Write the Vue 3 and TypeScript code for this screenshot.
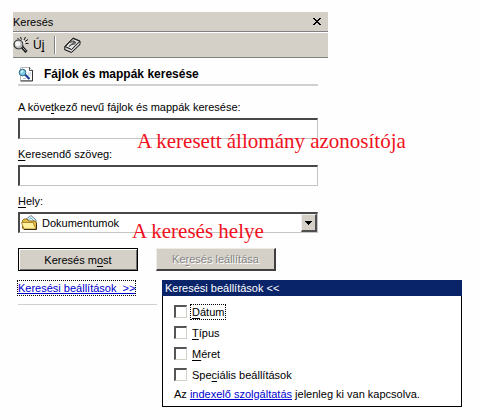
<script setup lang="ts">
import { ref } from 'vue'

interface Option {
  id: string
  before: string
  key: string
  after: string
}

const fileName = ref('')
const content = ref('')
const place = ref('Dokumentumok')
const checked = ref<string[]>([])

const options: Option[] = [
  { id: 'date', before: '', key: 'D', after: 'átum' },
  { id: 'type', before: '', key: 'T', after: 'ípus' },
  { id: 'size', before: '', key: 'M', after: 'éret' },
  { id: 'special', before: 'Spe', key: 'c', after: 'iális beállítások' },
]
</script>

<template>
  <main class="page">
    <section class="panel">
      <header class="titlebar">
        <span>Keresés</span>
        <button class="close" type="button" aria-label="Bezárás">
          <svg width="8" height="7" viewBox="0 0 8 7" shape-rendering="crispEdges">
            <path d="M0 0h2v1h1v1h2v-1h1v-1h2v1h-1v1h-1v1h-1v1h1v1h1v1h1v1h-2v-1h-1v-1h-2v1h-1v1h-2v-1h1v-1h1v-1h1v-1h-1v-1h-1v-1h-1z" fill="#000" />
          </svg>
        </button>
      </header>

      <nav class="toolbar">
        <button class="tool new" type="button">
          <svg width="16" height="16" viewBox="0 0 16 16">
            <path d="M7.500 0l1 2.500M12.500 0l-1.500 3M15 2.500l-3 2M12.500 6.500h3M4.500 1l1.500 1.500" stroke="#111" />
            <path d="M8.500 9.500l5 5.500" stroke="#111" stroke-width="3" />
            <path d="M9.500 10.500l3.500 3.700" stroke="#b5b5b5" />
            <circle cx="5.500" cy="7.500" r="4.500" fill="#b9b9b9" stroke="#333" stroke-width="1.200" />
            <circle cx="4.800" cy="6.800" r="2.600" fill="#f4f4f4" />
            <path d="M9.500 3.500l2 1.500-1 2.500" fill="none" stroke="#fff" />
          </svg>
          <span>Ú<u>j</u></span>
        </button>
        <span class="divider"></span>
        <button class="tool" type="button" aria-label="Súgó">
          <svg width="17" height="16" viewBox="0 0 17 16">
            <path d="M.8 9.500l8.200-8.500 7 3v3.500l-8.500 8-6.700-2.700z" fill="#8b8b8b" stroke="#111" />
            <path d="M1.500 9.500l7.500-8 6.500 2.700-8 8.300z" fill="#e6e6e6" stroke="#222" />
            <path d="M1.500 11.500l6 2.500 8-7.800" fill="none" stroke="#fff" />
            <path d="M5 9.500l6-5M6 5.500l3.500-1.500 2 1.500-1 1.500-3.500.7" fill="none" stroke="#555" stroke-width="1.200" />
          </svg>
        </button>
      </nav>

      <form class="form" @submit.prevent>
        <h1 class="heading">
          <svg width="16" height="16" viewBox="0 0 16 16">
            <path d="M2.500 1.500h9l3 3v10h-12z" fill="#fff" stroke="#bbb" />
            <path d="M14.500 4v11h-12" fill="none" stroke="#333" />
            <path d="M11.500 1v3.500h3" fill="none" stroke="#555" />
            <path d="M10 7h3M10 9h3M5 12.500h3" stroke="#b9c6d6" />
            <path d="M7 8.500l4.500 4.500" stroke="#153c91" stroke-width="2.200" />
            <circle cx="4.500" cy="6.500" r="3.300" fill="#82cbe4" stroke="#286789" />
            <path d="M3 6.500l2-2" stroke="#eaffff" stroke-width="1.200" />
          </svg>
          <span>Fájlok és mappák keresése</span>
        </h1>

        <label class="label" for="file-name">A köve<u>t</u>kező nevű fájlok és mappák keresése:</label>
        <input id="file-name" v-model="fileName" class="field" type="text" />

        <label class="label" for="content"><u>K</u>eresendő szöveg:</label>
        <input id="content" v-model="content" class="field" type="text" />

        <label class="label" for="place"><u>H</u>ely:</label>
        <div class="combo">
          <svg width="17" height="16" viewBox="0 0 17 16">
            <path d="M4 5l6-4.500 5 4.500v6h-9z" fill="#e8f3fa" stroke="#65869b" />
            <path d="M7 5l3-2 3 3" fill="none" stroke="#71b5d8" />
            <path d="M1.500 13.500v-8l1.500-1.500h3l1.500 2h6.500l1.500 2v6h-13z" fill="#e3bc45" stroke="#8b6c1c" />
            <path d="M.5 7.500h11.500l3 6.500h-12z" fill="#fff09b" stroke="#ae8b2f" />
            <path d="M3 14.500h12.500v-6" fill="none" stroke="#3c3211" />
          </svg>
          <select id="place" v-model="place" class="select">
            <option>Dokumentumok</option>
          </select>
          <span class="arrow">
            <svg width="7" height="4" viewBox="0 0 7 4" shape-rendering="crispEdges">
              <path d="M0 0h7v1h-1v1h-1v1h-1v1h-1v-1h-1v-1h-1v-1h-1z" fill="#000" />
            </svg>
          </span>
        </div>

        <div class="actions">
          <button class="button primary" type="submit">Keresés m<u>o</u>st</button>
          <button class="button" type="button" disabled>Ke<u>r</u>esés leállítása</button>
        </div>
      </form>
      <p class="note note-name">A keresett állomány azonosítója</p>
      <p class="note note-place">A keresés helye</p>
    </section>

    <div class="lower">
      <div class="toggle">
        <a class="toggle-link" href="#options">Keresési beállítások&nbsp; &gt;&gt;</a>
      </div>
      <section id="options" class="options">
        <h2 class="options-title">Keresési beállítások &lt;&lt;</h2>
        <div class="options-body">
          <label v-for="option in options" :key="option.id" class="option">
            <input v-model="checked" class="check" type="checkbox" :value="option.id" />
            <span :class="['option-text', { focused: option.id === 'date' }]">{{ option.before }}<u>{{ option.key }}</u>{{ option.after }}</span>
          </label>
          <p class="status">Az <a href="#index">indexelő szolgáltatás</a> jelenleg ki van kapcsolva.</p>
        </div>
      </section>
    </div>
  </main>
</template>

<style>
body {
  margin: 0;
  background: #fefefe;
}
</style>

<style scoped>
* {
  box-sizing: border-box;
}

.page {
  padding: 12px 18px 12px 13px;
  font: 11px/14px "Liberation Sans", Arial, sans-serif;
  color: #000;
}

.panel {
  position: relative;
  margin-right: 134px;
}

button,
input,
select {
  margin: 0;
  font: inherit;
  color: inherit;
}

u {
  text-underline-offset: 2px;
}

.titlebar {
  display: flex;
  align-items: center;
  justify-content: space-between;
  height: 20px;
  padding-right: 7px;
  background: #d4d0c8;
  border-bottom: 1px solid #808080;
}

.close {
  display: flex;
  padding: 0;
  border: 0;
  background: none;
}

.toolbar {
  display: flex;
  align-items: center;
  gap: 8px;
  height: 26px;
  background: #d4d0c8;
  border-top: 1px solid #fff;
  border-bottom: 1px solid #808080;
}

.tool {
  display: flex;
  align-items: center;
  gap: 4px;
  padding: 0 2px 0 0;
  border: 0;
  background: none;
}

.new {
  font-size: 12px;
}

.divider {
  width: 2px;
  height: 18px;
  border-left: 1px solid #808080;
  border-right: 1px solid #fff;
}

.form {
  padding: 5px 10px 0 5px;
}

.heading {
  display: flex;
  align-items: center;
  gap: 10px;
  height: 23px;
  margin: 0 0 14px;
  border-bottom: 2px solid #d0d0d0;
  font-size: 12px;
  font-weight: bold;
}

.label {
  display: block;
  height: 18px;
}

.field,
.combo {
  display: block;
  width: 100%;
  height: 21px;
  margin-bottom: 8px;
  padding: 0 2px;
  background: #fff;
  border: 1px solid #c4c4c4;
  border-top: 2px solid #484848;
  border-left: 2px solid #484848;
  border-radius: 0;
  outline: 0;
}

.combo {
  display: flex;
  align-items: center;
  margin-bottom: 15px;
  padding: 0 0 0 1px;
}

.select {
  flex: 1;
  min-width: 0;
  padding: 0 4px;
  border: 0;
  background: none;
  appearance: none;
  outline: 0;
}

.arrow {
  display: flex;
  align-items: center;
  justify-content: center;
  width: 16px;
  height: 18px;
  background: #d4d0c8;
  border: 1px solid #eee;
  border-right: 2px solid #505050;
  border-bottom: 2px solid #505050;
  pointer-events: none;
}

.actions {
  display: grid;
  grid-template-columns: 1fr 1fr;
  column-gap: 18px;
  margin-right: 42px;
}

.button {
  height: 23px;
  padding: 0;
  background: #d4d0c8;
  border: 1px solid #eeece6;
  border-right: 2px solid #404040;
  border-bottom: 2px solid #404040;
  border-radius: 0;
}

.primary {
  border: 1px solid #000;
  box-shadow: inset 1px 1px #fff, inset -1px -1px #707070;
}

.button:disabled {
  color: #858585;
  text-shadow: 1px 1px #fff;
}

.note {
  position: absolute;
  margin: 0;
  color: #f01020;
  font: 21px/24px "Liberation Serif", "Times New Roman", serif;
  white-space: nowrap;
  pointer-events: none;
}

.note-name {
  top: 117px;
  left: 124px;
}

.note-place {
  top: 207px;
  left: 119px;
}

.lower {
  display: flex;
  align-items: flex-start;
  gap: 5px;
  padding: 9px 0 0 5px;
}

.toggle {
  width: 139px;
  padding: 1px 0 9px;
  border-bottom: 1px solid #d0d0d0;
}

.toggle-link {
  display: inline-block;
  outline: 1px dotted #000;
}

a {
  color: #0000d0;
  text-underline-offset: 1px;
}

.options {
  flex: 1;
  background: #fff;
  border: 1px solid #000;
  border-top: 0;
}

.options-title {
  margin: 0 -1px;
  padding: 1px 3px;
  background: #0a246a;
  color: #fff;
  font-size: 11px;
  font-weight: normal;
}

.options-body {
  padding: 5px 11px;
}

.option {
  display: flex;
  align-items: center;
  gap: 4px;
  height: 21px;
}

.check {
  width: 13px;
  height: 13px;
  background: #fff;
  border: 1px solid #d4d0c8;
  border-top: 2px solid #555;
  border-left: 2px solid #555;
  appearance: none;
}

.check:checked {
  background: #0a246a;
}

.option-text {
  padding: 0 1px;
}

.focused {
  outline: 1px dotted #000;
}

.status {
  margin: 2px 0 0;
}
</style>
